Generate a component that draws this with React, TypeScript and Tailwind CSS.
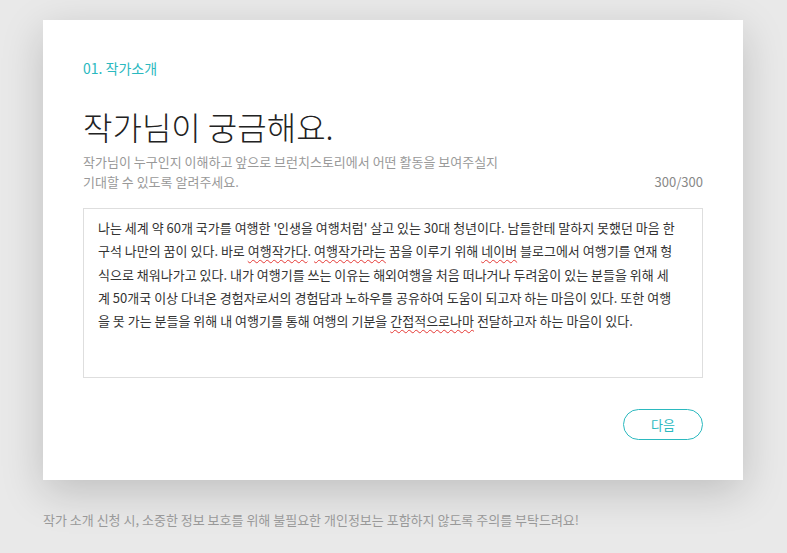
const font = { fontFamily: '"Noto Sans CJK KR", "Noto Sans", sans-serif' };

function Wavy({ children }: { children: React.ReactNode }) {
  return (
    <span className="underline decoration-wavy decoration-[#e53935] decoration-1 underline-offset-[3px]">
      {children}
    </span>
  );
}

export default function App() {
  return (
    <main className="min-h-[553px] w-full bg-[#e9e9e9] pt-5 pb-8 px-[43px]" style={font}>
      {/* Card */}
      <div className="w-[700px] h-[460px] bg-white shadow-[0_12px_40px_rgba(0,0,0,0.18)] px-10 pt-[38px]">
        <p className="text-[14px] leading-5 text-[#2bb9bf]">01. 작가소개</p>
        <h1 className="mt-[28px] text-[32px] leading-[40px] font-light text-[#222] tracking-[0px]">
          작가님이 궁금해요.
        </h1>
        <div className="mt-[6px] flex items-end justify-between text-[13px] leading-5 text-[#999]">
          <p>
            작가님이 누구인지 이해하고 앞으로 브런치스토리에서 어떤 활동을 보여주실지
            <br />
            기대할 수 있도록 알려주세요.
          </p>
          <span className="text-[#888]">300/300</span>
        </div>
        <div className="mt-[16px] h-[170px] border border-[#dedede] px-[14px] pt-[7px] text-[13px] text-[#333] whitespace-nowrap">
          <div className="h-[23.3px] leading-[23.3px]">
            나는 세계 약 60개 국가를 여행한 '인생을 여행처럼' 살고 있는 30대 청년이다. 남들한테 말하지 못했던 마음 한
          </div>
          <div className="h-[23.3px] leading-[23.3px]">
            구석 나만의 꿈이 있다. 바로 <Wavy>여행작가다</Wavy>. <Wavy>여행작가라는</Wavy> 꿈을 이루기 위해 <Wavy>네이버</Wavy> 블로그에서 여행기를 연재 형
          </div>
          <div className="h-[23.3px] leading-[23.3px]">
            식으로 채워나가고 있다. 내가 여행기를 쓰는 이유는 해외여행을 처음 떠나거나 두려움이 있는 분들을 위해 세
          </div>
          <div className="h-[23.3px] leading-[23.3px]">
            계 50개국 이상 다녀온 경험자로서의 경험담과 노하우를 공유하여 도움이 되고자 하는 마음이 있다. 또한 여행
          </div>
          <div className="h-[23.3px] leading-[23.3px]">
            을 못 가는 분들을 위해 내 여행기를 통해 여행의 기분을 <Wavy>간접적으로나마</Wavy> 전달하고자 하는 마음이 있다.
          </div>
        </div>
        <div className="mt-[31px] flex justify-end">
          <button className="w-20 h-[31px] rounded-full border border-[#2bb9bf] text-[13px] text-[#2bb9bf]">
            다음
          </button>
        </div>
      </div>
      <p className="mt-[30px] text-[13px] leading-5 text-[#999]">
        작가 소개 신청 시, 소중한 정보 보호를 위해 불필요한 개인정보는 포함하지 않도록 주의를 부탁드려요!
      </p>
    </main>
  );
}
